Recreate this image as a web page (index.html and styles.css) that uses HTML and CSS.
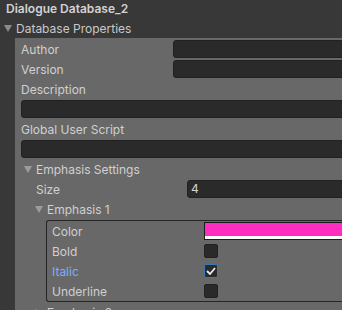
FILE: index.html
```html
<!DOCTYPE html>
<html lang="en">
<head>
  <meta charset="UTF-8" />
  <meta name="viewport" content="width=device-width, initial-scale=1.0"/>
  <title>Dialogue Database_2</title>
  <link rel="stylesheet" href="styles.css">
</head>
<body>

  <div class="inspector">
    <div class="title">Dialogue Database_2</div>

    <div class="foldout top-foldout"><span class="arrow"></span>Database Properties</div>

    <div class="panel">
      <div class="row">
        <span class="label">Author</span>
        <span class="field"></span>
      </div>
      <div class="row">
        <span class="label">Version</span>
        <span class="field"></span>
      </div>
      <div class="row">
        <span class="label">Description</span>
      </div>
      <div class="row">
        <span class="field"></span>
      </div>
      <div class="row">
        <span class="label">Global User Script</span>
      </div>
      <div class="row">
        <span class="field"></span>
      </div>

      <div class="row foldout level-1"><span class="arrow"></span>Emphasis Settings</div>
      <div class="row level-2">
        <span class="label size-label">Size</span>
        <span class="field number">4</span>
      </div>

      <div class="row foldout level-2b"><span class="arrow"></span>Emphasis 1</div>
      <div class="group-box">
        <div class="row">
          <span class="label">Color</span>
          <span class="color-field"><span class="swatch"></span><span class="alpha"></span></span>
        </div>
        <div class="row">
          <span class="label">Bold</span>
          <span class="checkbox"></span>
        </div>
        <div class="row">
          <span class="label focused">Italic</span>
          <span class="checkbox checked">
            <svg width="10" height="8" viewBox="0 0 10 8"><polyline points="1,4 4,7 9,1" fill="none" stroke="#e8e8e8" stroke-width="1.8"/></svg>
          </span>
        </div>
        <div class="row">
          <span class="label">Underline</span>
          <span class="checkbox"></span>
        </div>
      </div>

      <div class="row foldout level-2b closed"><span class="arrow"></span>Emphasis 2</div>
      <div class="row foldout level-2b closed"><span class="arrow"></span>Emphasis 3</div>
    </div>
  </div>

</body>
</html>
```

FILE: styles.css
```css
body {
  margin: 0;
  font-family: Inter, "Noto Sans", sans-serif;
  font-size: 12px;
  background-color: #383838;
  color: #c4c4c4;
  overflow: hidden;
  height: 310px;
}

.inspector {
  width: 360px;
}

.title {
  height: 18px;
  line-height: 17px;
  padding-left: 6px;
  font-weight: 600;
  color: #d2d2d2;
}

.foldout {
  display: flex;
  align-items: center;
  height: 20px;
}

.top-foldout {
  padding-left: 4px;
  color: #c8c8c8;
}

.arrow {
  width: 0;
  height: 0;
  border-left: 4px solid transparent;
  border-right: 4px solid transparent;
  border-top: 7px solid #8a8a8a;
  margin-right: 4px;
  margin-top: 1px;
}

.panel .arrow {
  border-top-color: #9c9c9c;
}

.closed .arrow {
  border-top: 4px solid transparent;
  border-bottom: 4px solid transparent;
  border-left: 7px solid #9c9c9c;
  border-right: none;
  margin-right: 5px;
}

.panel {
  margin-left: 15px;
  padding: 1px 0 0 6px;
  background-color: #686868;
  color: #d0d0d0;
  height: 400px;
}

.row {
  display: flex;
  align-items: center;
  height: 20px;
}

.label {
  flex: none;
  width: 152px;
}

.field {
  flex: 1;
  height: 18px;
  box-sizing: border-box;
  background-color: #2a2a2a;
  border: 1px solid #212121;
  border-radius: 3px;
  line-height: 16px;
  padding-left: 3px;
  color: #d2d2d2;
}

.level-1 {
  padding-left: 3px;
}

.level-2 {
  padding-left: 15px;
}

.size-label {
  width: 151px;
}

.level-2b {
  padding-left: 14px;
}

.group-box {
  margin: 1px 0 0 25px;
  border: 1px solid #262626;
  border-right: none;
  border-radius: 3px 0 0 3px;
}

.group-box .row {
  padding-left: 5px;
}

.focused {
  color: #7baefa;
}

.color-field {
  flex: 1;
  height: 18px;
  box-sizing: border-box;
  border: 1px solid #1c1c1c;
  border-right: none;
  display: flex;
  flex-direction: column;
}

.swatch {
  flex: 1;
  background-color: #ff2ec0;
}

.alpha {
  height: 3px;
  background-color: #ffffff;
}

.checkbox {
  width: 14px;
  height: 14px;
  box-sizing: border-box;
  background-color: #2a2a2a;
  border: 1px solid #212121;
  border-radius: 2px;
  display: flex;
  align-items: center;
  justify-content: center;
}

.checkbox.checked {
  border-color: #3a79bb;
}
```
